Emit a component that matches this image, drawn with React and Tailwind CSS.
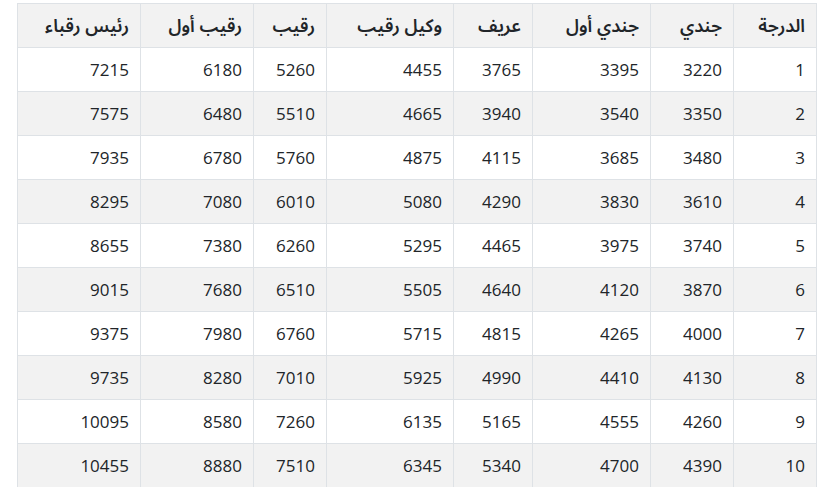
import React from 'react';

const headers = ['الدرجة', 'جندي', 'جندي أول', 'عريف', 'وكيل رقيب', 'رقيب', 'رقيب أول', 'رئيس رقباء'];
const widths = ['w-[83px]', 'w-[83px]', 'w-[118px]', 'w-[79px]', 'w-[127px]', 'w-[73px]', 'w-[113px]', 'w-[123px]'];

const rows = [
  [1, 3220, 3395, 3765, 4455, 5260, 6180, 7215],
  [2, 3350, 3540, 3940, 4665, 5510, 6480, 7575],
  [3, 3480, 3685, 4115, 4875, 5760, 6780, 7935],
  [4, 3610, 3830, 4290, 5080, 6010, 7080, 8295],
  [5, 3740, 3975, 4465, 5295, 6260, 7380, 8655],
  [6, 3870, 4120, 4640, 5505, 6510, 7680, 9015],
  [7, 4000, 4265, 4815, 5715, 6760, 7980, 9375],
  [8, 4130, 4410, 4990, 5925, 7010, 8280, 9735],
  [9, 4260, 4555, 5165, 6135, 7260, 8580, 10095],
  [10, 4390, 4700, 5340, 6345, 7510, 8880, 10455],
];

export default function App() {
  return (
    <div className="bg-white w-[828px] h-[487px] overflow-hidden pt-[3px] pl-[17px]" style={{ fontFamily: '"Open Sans", "Noto Sans Arabic", "Noto Sans", "DejaVu Sans", sans-serif' }}>
      <table dir="rtl" className="table-fixed border-collapse w-[799px] text-[17px] text-[#212529]">
        <thead>
          <tr className="bg-[#f2f2f2] h-[44px]">
            {headers.map((h, i) => (
              <th key={i} className={`${widths[i]} border border-[#dee2e6] px-[11px] text-right font-semibold text-[18px]`}>{h}</th>
            ))}
          </tr>
        </thead>
        <tbody>
          {rows.map((r, ri) => (
            <tr key={ri} className={`h-[44px] ${ri % 2 === 1 ? 'bg-[#f2f2f2]' : 'bg-white'}`}>
              {r.map((v, ci) => (
                <td key={ci} className="border border-[#dee2e6] px-[11px] text-right">{v}</td>
              ))}
            </tr>
          ))}
        </tbody>
      </table>
    </div>
  );
}
